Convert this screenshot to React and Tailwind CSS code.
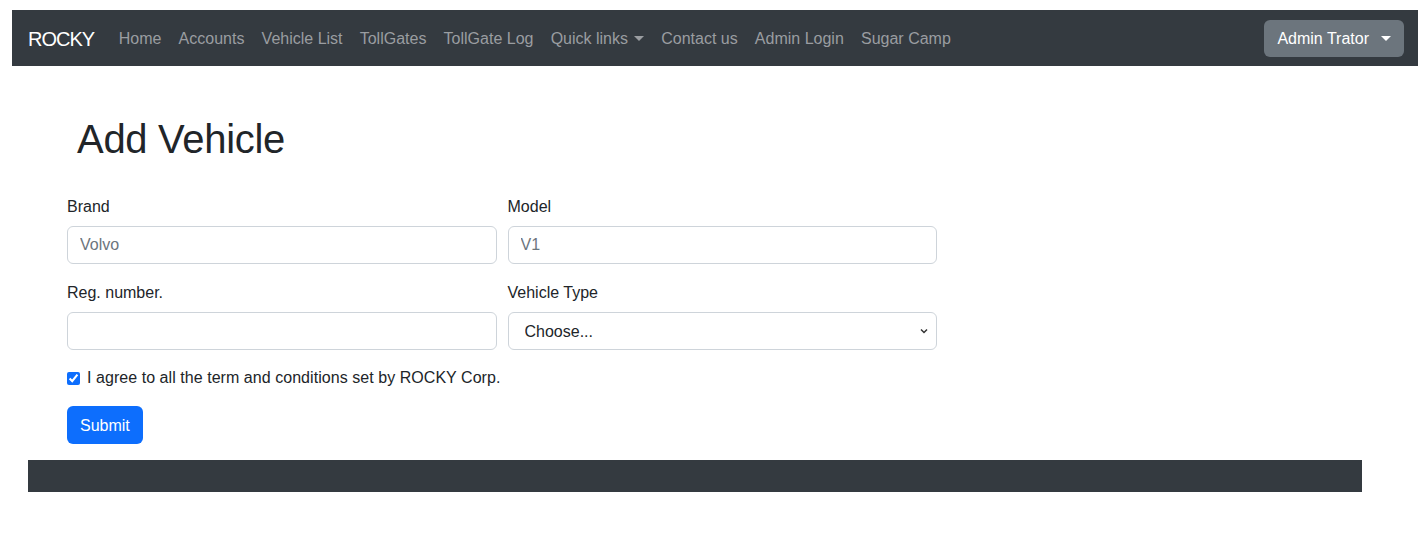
import React from 'react';

const links = ['Home', 'Accounts', 'Vehicle List', 'TollGates', 'TollGate Log', 'Quick links', 'Contact us', 'Admin Login', 'Sugar Camp'];

function Caret({ className }) {
  return (
    <svg width="10" height="6" viewBox="0 0 10 6" className={className}>
      <path d="M0 0 L10 0 L5 5 Z" fill="currentColor" />
    </svg>
  );
}

export default function App() {
  return (
    <div className="min-h-[548px] bg-white pt-[10px] pl-[12px] text-[#212529]" style={{ fontFamily: '"Liberation Sans", Arial, sans-serif' }}>
      {/* navbar */}
      <nav className="flex h-[56px] items-center justify-between bg-[#343a40] pl-4 pr-[14px] pt-[2px]">
        <div className="flex items-center">
          <span className="mr-4 text-[20px] leading-[30px] tracking-[-1px] text-white">ROCKY</span>
          {links.map((l) => (
            <span key={l} className="flex items-center px-[8.6px] text-[16px] text-[#9a9da1]">
              {l}
              {l === 'Quick links' && <Caret className="ml-[6px]" />}
            </span>
          ))}
        </div>
        <button className="-mt-[2px] flex h-[37px] items-center rounded-[6px] bg-[#6c757d] px-[13px] pt-[2px] text-[16px] text-white">
          Admin Trator
          <Caret className="ml-3" />
        </button>
      </nav>

      {/* form */}
      <div className="pl-[55px]">
        <h1 className="mt-[49px] ml-[10px] text-[40px] font-medium leading-[48px] tracking-[-0.3px]">Add Vehicle</h1>
        <div className="mt-[31px] w-[870px]">
          <div className="grid grid-cols-2 gap-x-[11px] gap-y-4">
            <div>
              <label className="block pt-px text-[16px] leading-6 mb-[7px]">Brand</label>
              <input className="h-[38px] w-full rounded-[6px] border border-[#ced4da] px-3 text-[16px] placeholder-[#6c757d] outline-none" placeholder="Volvo" />
            </div>
            <div>
              <label className="block pt-px text-[16px] leading-6 mb-[7px]">Model</label>
              <input className="h-[38px] w-full rounded-[6px] border border-[#ced4da] px-3 text-[16px] placeholder-[#6c757d] outline-none" placeholder="V1" />
            </div>
            <div>
              <label className="block pt-px text-[16px] leading-6 mb-[7px]">Reg. number.</label>
              <input className="h-[38px] w-full rounded-[6px] border border-[#ced4da] px-3 text-[16px] outline-none" />
            </div>
            <div>
              <label className="block pt-px text-[16px] leading-6 mb-[7px]">Vehicle Type</label>
              <div className="relative">
                <select className="h-[38px] w-full appearance-none rounded-[6px] border border-[#ced4da] bg-white pl-4 pt-px text-[16px] text-[#212529] outline-none">
                  <option>Choose...</option>
                </select>
                <svg width="10" height="10" viewBox="0 0 10 10" className="pointer-events-none absolute right-[8px] top-[14px]">
                  <path d="M2 3.5 L5 6.5 L8 3.5" fill="none" stroke="#333" strokeWidth="1.5" />
                </svg>
              </div>
            </div>
          </div>
          <div className="mt-4 flex h-6 items-center">
            <input type="checkbox" defaultChecked className="h-[13px] w-[13px] accent-[#0d6efd]" />
            <span className="ml-[7px] text-[16px] tracking-[0.05px]">I agree to all the term and conditions set by ROCKY Corp.</span>
          </div>
          <button className="mt-4 h-[38px] rounded-[6px] bg-[#0d6efd] px-[13px] pt-px text-[16px] text-white">Submit</button>
        </div>
      </div>

      {/* footer */}
      <div className="mt-4 ml-4 h-[32px] w-[1334px] bg-[#343a40]" />
    </div>
  );
}
